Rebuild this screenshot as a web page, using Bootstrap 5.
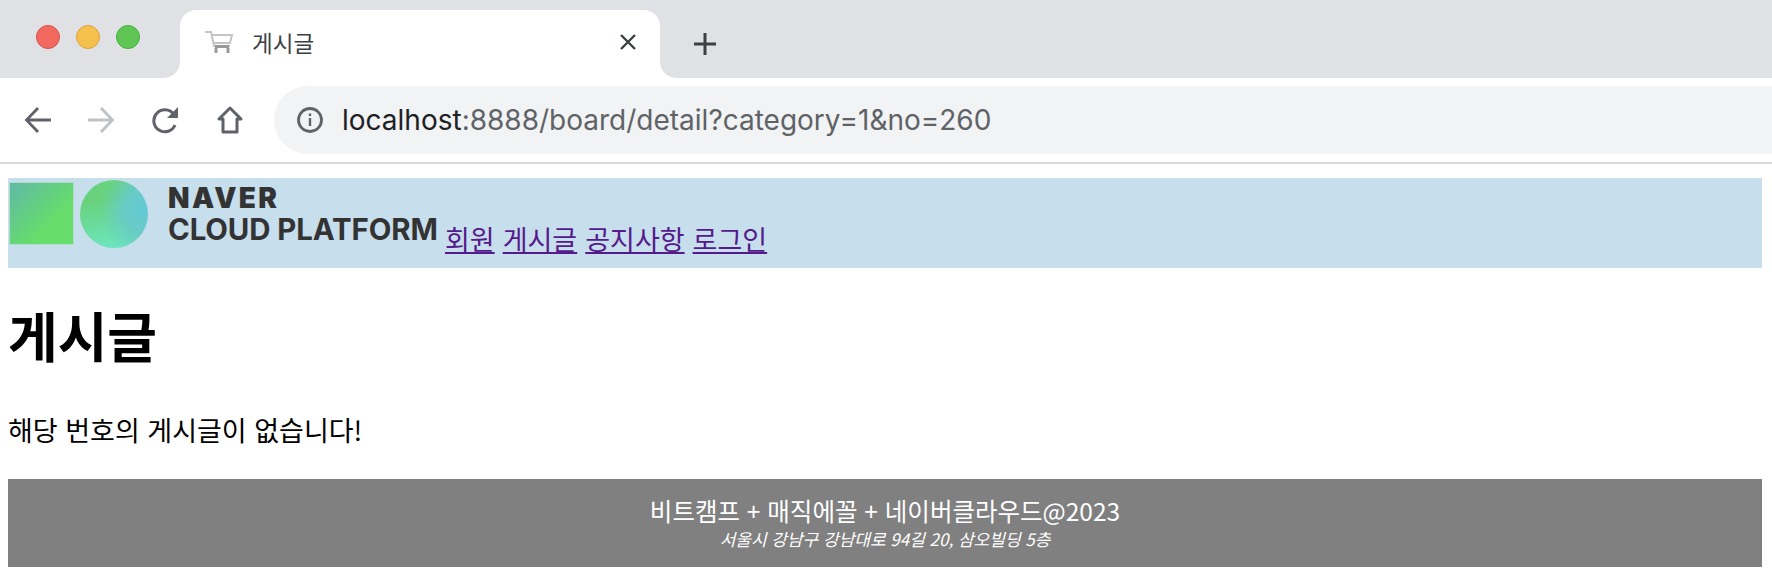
<!DOCTYPE html>
<html lang="ko"><head><meta charset="utf-8"><title>게시글</title>
<link href="https://cdn.jsdelivr.net/npm/bootstrap@5.3.0/dist/css/bootstrap.min.css" rel="stylesheet">
<style>
:root{--kr:"Noto Sans CJK KR","Noto Sans",sans-serif;}
body{background:#fff;color:#000;font-family:var(--kr);overflow:hidden;}
.tab-strip{height:78px;background:#dfe1e5;padding-top:10px;}
.lights{width:180px;padding:15px 0 0 36px;gap:16px;}
.light{width:24px;height:24px;border-radius:50%;border:1px solid;}
.light-r{background:#f1695f;border-color:#d9534a;}
.light-y{background:#f6c04e;border-color:#dea23a;}
.light-g{background:#5fc653;border-color:#4aad40;}
.chrome-tab{width:480px;height:68px;background:#fff;border-radius:16px 16px 0 0;position:relative;padding:0 19px 4px 24px;}
.chrome-tab::before,.chrome-tab::after{content:"";position:absolute;bottom:0;width:16px;height:16px;}
.chrome-tab::before{left:-16px;background:radial-gradient(circle at 0 0,#dfe1e5 15.5px,#fff 16px);}
.chrome-tab::after{right:-16px;background:radial-gradient(circle at 100% 0,#dfe1e5 15.5px,#fff 16px);}
.tab-name{font-size:22.5px;color:#3c4043;margin-left:18px;line-height:1;}
.tab-plus{margin-left:33px;margin-top:22px;}
.tool-bar{height:86px;padding:8px 0 0 24px;border-bottom:2px solid #d9d9d9;}
.tool-btn{width:28px;}
.tools{gap:36px;width:250px;height:68px;}
.url-box{height:68px;background:#f1f3f4;border-radius:34px 0 0 34px;padding-left:23px;font-family:Inter,"Liberation Sans",sans-serif;font-size:28px;color:#5f6368;gap:19px;}
.url-host{color:#202124;}
.page-wrap{padding:14px 10px 0 8px;}
.top-band{height:90px;background:#c7deec;padding:2px 2px 0;line-height:1;}
.logo-art{width:430px;height:68px;gap:7px;}
.logo-sq{width:63px;height:61px;margin-top:3px;background:linear-gradient(135deg,#5fb9a6,#67dd6c 65%);outline:1px solid #b0dcc8;}
.logo-ci{width:68px;height:68px;border-radius:50%;background:radial-gradient(circle at 100% 45%,#62c9d8 0,#68cbc6 30%,transparent 62%),linear-gradient(170deg,#68d27c 30%,#6ce6bd 90%);}
.logo-words{margin-left:13px;font-family:Inter,"Liberation Sans",sans-serif;color:#333;font-weight:700;line-height:1;letter-spacing:-.1px;}
.logo-w1{font-size:28px;font-weight:900;margin-top:4px;letter-spacing:2.4px;}
.logo-w2{font-size:29.4px;margin-top:3px;}
.nav-links{font-size:27px;line-height:1;margin:0 0 16px 5px;gap:8px;}
.nav-links a{color:#551a8b;}
.page-title{font-size:54px;font-weight:700;line-height:1;margin:40px 0 0;}
.page-msg{font-size:27px;line-height:1;margin:54px 0 0;}
.foot-band{height:88px;margin-top:36px;background:#808080;color:#fff;}
.foot-main{font-size:24.5px;line-height:1;}
.foot-sub{font-size:17px;line-height:1;font-style:italic;margin-top:6px;}
</style></head>
<body class="m-0">
<div class="tab-strip d-flex">
  <div class="lights d-flex"><span class="light light-r d-block"></span><span class="light light-y d-block"></span><span class="light light-g d-block"></span></div>
  <div class="chrome-tab d-flex align-items-center">
    <svg width="30" height="24" viewBox="0 0 30 24" fill="none" stroke="#a9a9a9" stroke-width="2"><path d="M1 2h6l3 14h16" stroke="#c4c4c4"/><path d="M8 5h20l-2 8H10" stroke="#c4c4c4"/><path d="M11 15h14v3H11z" fill="#999" stroke="none"/><path d="M12 18v5M24 18v5" stroke="#999" stroke-width="3"/></svg>
    <span class="tab-name">게시글</span>
    <svg class="ms-auto me-1" width="18" height="18" viewBox="0 0 18 18" stroke="#3c4043" stroke-width="2.4"><path d="M2 2l14 14M16 2L2 16"/></svg>
  </div>
  <svg class="tab-plus" width="24" height="24" viewBox="0 0 24 24" stroke="#3c4043" stroke-width="3"><path d="M12 1v22M1 12h22"/></svg>
</div>
<div class="tool-bar d-flex">
  <div class="tools d-flex align-items-center">
    <svg class="tool-btn" height="26" viewBox="0 0 28 26" fill="none" stroke="#5f6368" stroke-width="2.8"><path d="M27 13H3M14 1L2.500 13 14 25"/></svg>
    <svg class="tool-btn" height="26" viewBox="0 0 28 26" fill="none" stroke="#bdc1c6" stroke-width="2.8"><path d="M0 13h25M13 1l11.500 12L13 25"/></svg>
    <svg class="tool-btn" height="28" viewBox="0 0 28 28" fill="none" stroke="#5f6368" stroke-width="3"><path d="M23 19a11 11 0 1 1-1.500-11"/><path d="M26 1v11H15z" fill="#5f6368" stroke="none"/></svg>
    <svg class="tool-btn" height="28" viewBox="0 0 28 28" fill="none" stroke="#5f6368" stroke-width="3" stroke-linejoin="round"><path d="M14 2L3 13h4v13h14V13h4z"/></svg>
  </div>
  <div class="url-box flex-grow-1 d-flex align-items-center">
    <svg width="26" height="26" viewBox="0 0 26 26" fill="none" stroke="#5f6368" stroke-width="2.8"><circle cx="13" cy="13" r="11.500"/><path d="M13 11v8M13 6.500v2.500" stroke-width="2.400"/></svg>
    <span><span class="url-host">localhost</span>:8888/board/detail?category=1&amp;no=260</span>
  </div>
</div>
<div class="page-wrap">
  <div class="top-band d-flex align-items-start">
    <div class="logo-art d-flex flex-shrink-0">
      <div class="logo-sq"></div><div class="logo-ci"></div>
      <div class="logo-words"><div class="logo-w1">NAVER</div><div class="logo-w2 text-nowrap">CLOUD PLATFORM</div></div>
    </div>
    <div class="nav-links d-flex align-self-end"><a href="#">회원</a><a href="#">게시글</a><a href="#">공지사항</a><a href="#">로그인</a></div>
  </div>
  <h1 class="page-title">게시글</h1>
  <p class="page-msg">해당 번호의 게시글이 없습니다!</p>
  <footer class="foot-band d-flex flex-column align-items-center justify-content-center text-center">
    <div class="foot-main">비트캠프 + 매직에꼴 + 네이버클라우드@2023</div>
    <div class="foot-sub">서울시 강남구 강남대로 94길 20, 삼오빌딩 5층</div>
  </footer>
</div>
<script src="https://cdn.jsdelivr.net/npm/bootstrap@5.3.0/dist/js/bootstrap.bundle.min.js"></script>
</body></html>
